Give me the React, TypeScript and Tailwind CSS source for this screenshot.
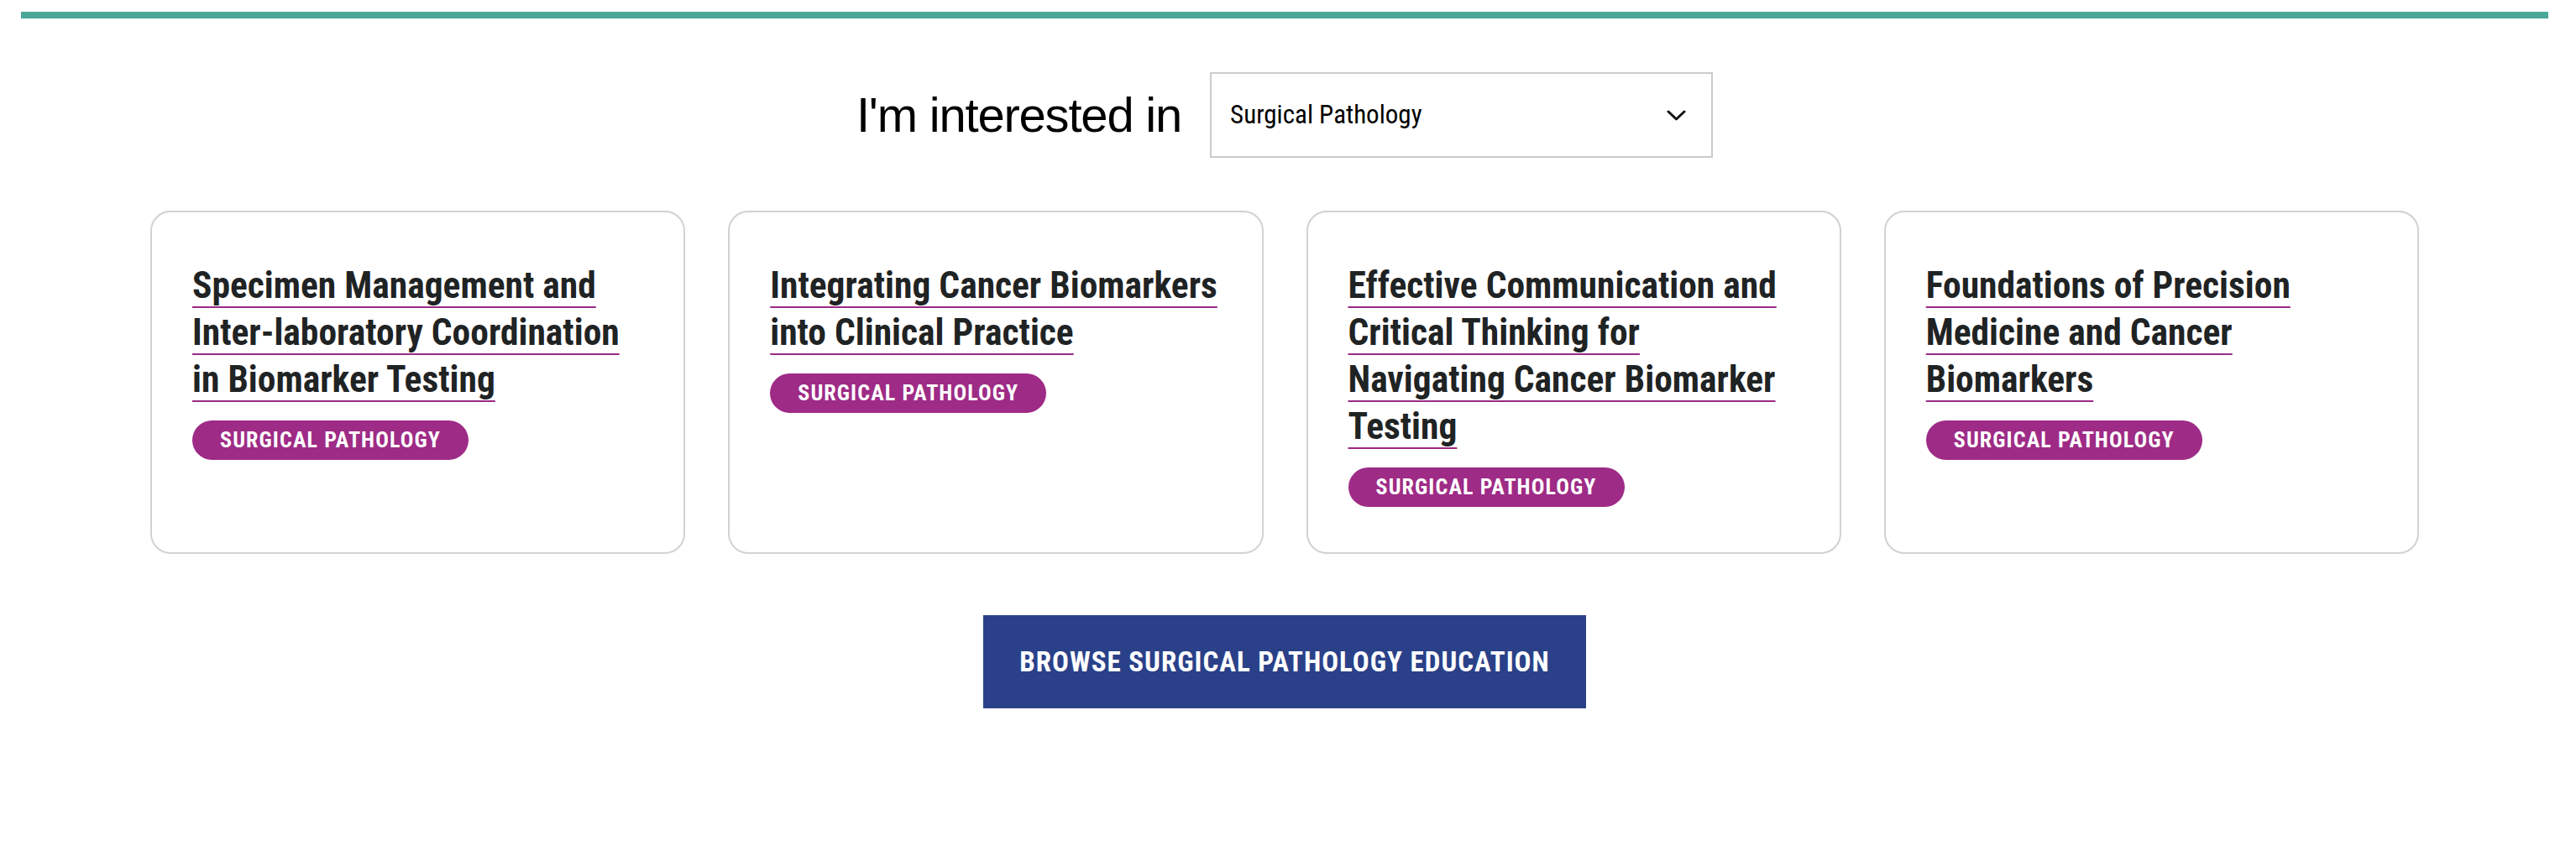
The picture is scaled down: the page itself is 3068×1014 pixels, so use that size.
const courses = [
  'Specimen Management and Inter-laboratory Coordination in Biomarker Testing',
  'Integrating Cancer Biomarkers into Clinical Practice',
  'Effective Communication and Critical Thinking for Navigating Cancer Biomarker Testing',
  'Foundations of Precision Medicine and Cancer Biomarkers',
]

const Chevron = () => (
  <svg width="23" height="13" viewBox="0 0 23 13" fill="none">
    <path d="M2 2l9.5 9 9.5-9" stroke="#111" strokeWidth="3" strokeLinecap="round" strokeLinejoin="round" />
  </svg>
)

const CourseCard = ({ title }: { title: string }) => {
  return (
    <div className="rounded-[24px] border-2 border-[#d2d2d2] bg-white px-[48px] pt-[60px] pb-[54px]">
      <h3 className="text-[43.5px] leading-[56px] font-bold text-[#1f2324] underline decoration-[#9c2a85] decoration-2 underline-offset-[10px] [text-decoration-skip-ink:none]">
        {title}
      </h3>
      <span className="mt-[20px] inline-flex h-[47px] items-center rounded-full bg-[#9e2b86] px-[33px] text-[26px] font-bold tracking-[1.1px] text-white">
        SURGICAL PATHOLOGY
      </span>
    </div>
  )
}

export default function App() {
  return (
    <div className="min-h-screen w-full bg-white [font-family:'Roboto_Condensed',Roboto,sans-serif]">
      <div className="w-[3060px] pt-[14px]">
        <div className="mx-[25px] h-[8px] bg-[#4aa797]" />

        <div className="mt-[64px] flex items-center justify-center gap-[34px]">
          <h2 className="text-[58px] leading-none font-normal tracking-[-1.2px] text-black [font-family:'Liberation_Sans',Arial,sans-serif]">
            I'm interested in
          </h2>
          <div className="flex h-[102px] w-[599px] items-center justify-between border-2 border-[#cccccc] pr-[30px] pl-[22px]">
            <span className="text-[31px] text-black">Surgical Pathology</span>
            <Chevron />
          </div>
        </div>

        <div className="mx-auto mt-[63px] grid w-[2702px] grid-cols-4 gap-[51px]">
          {courses.map((title) => (
            <CourseCard key={title} title={title} />
          ))}
        </div>

        <div className="mt-[73px] flex justify-center">
          <a href="#" className="flex h-[111px] w-[718px] items-center justify-center bg-[#2a4189] text-[33px] font-bold tracking-[1px] text-white">
            BROWSE SURGICAL PATHOLOGY EDUCATION
          </a>
        </div>
      </div>
    </div>
  )
}
